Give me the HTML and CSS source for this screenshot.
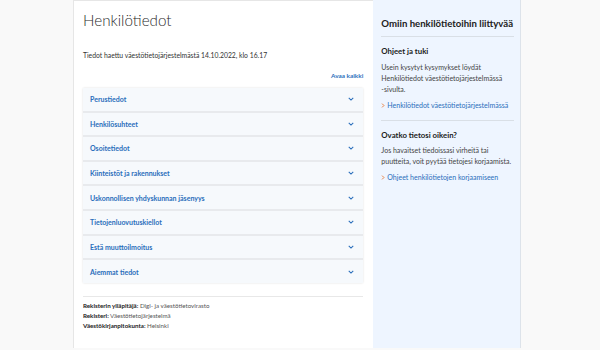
FILE: index.html
```html
<!DOCTYPE html>
<html lang="fi">
  <head>
    <meta charset="UTF-8" />
    <meta name="viewport" content="width=device-width, initial-scale=1.0" />
    <title>Henkilötiedot</title>
    <link rel="stylesheet" href="styles.css">
  </head>
  <body>
    <div class="layout">
      <main class="main">
        <h1>Henkilötiedot</h1>
        <p class="fetched">Tiedot haettu väestötietojärjestelmästä 14.10.2022, klo 16.17</p>

        <div class="open-all"><a href="#">Avaa kaikki</a></div>

        <div class="accordion">
          <div class="acc-item"><span>Perustiedot</span><svg class="chev" viewBox="0 0 8 5"><path d="M1 1l3 3 3-3"/></svg></div>
          <div class="acc-item"><span>Henkilösuhteet</span><svg class="chev" viewBox="0 0 8 5"><path d="M1 1l3 3 3-3"/></svg></div>
          <div class="acc-item"><span>Osoitetiedot</span><svg class="chev" viewBox="0 0 8 5"><path d="M1 1l3 3 3-3"/></svg></div>
          <div class="acc-item"><span>Kiinteistöt ja rakennukset</span><svg class="chev" viewBox="0 0 8 5"><path d="M1 1l3 3 3-3"/></svg></div>
          <div class="acc-item"><span>Uskonnollisen yhdyskunnan jäsenyys</span><svg class="chev" viewBox="0 0 8 5"><path d="M1 1l3 3 3-3"/></svg></div>
          <div class="acc-item"><span>Tietojenluovutuskiellot</span><svg class="chev" viewBox="0 0 8 5"><path d="M1 1l3 3 3-3"/></svg></div>
          <div class="acc-item"><span>Estä muuttoilmoitus</span><svg class="chev" viewBox="0 0 8 5"><path d="M1 1l3 3 3-3"/></svg></div>
          <div class="acc-item"><span>Aiemmat tiedot</span><svg class="chev" viewBox="0 0 8 5"><path d="M1 1l3 3 3-3"/></svg></div>
        </div>

        <div class="register">
          <div><b>Rekisterin ylläpitäjä:</b> Digi- ja väestötietovirasto</div>
          <div><b>Rekisteri:</b> Väestötietojärjestelmä</div>
          <div><b>Väestökirjanpitokunta:</b> Helsinki</div>
        </div>
      </main>

      <aside class="side">
        <h2>Omiin henkilötietoihin liittyvää</h2>

        <section class="side-block">
          <h3>Ohjeet ja tuki</h3>
          <p>Usein kysytyt kysymykset löydät Henkilötiedot väestötietojärjestelmässä <span class="nowrap">-sivulta.</span></p>
          <a class="side-link" href="#"><svg class="arrow" viewBox="0 0 5 8"><path d="M1 1l3 3-3 3"/></svg>Henkilötiedot väestötietojärjestelmässä</a>
        </section>

        <section class="side-block">
          <h3>Ovatko tietosi oikein?</h3>
          <p>Jos havaitset tiedoissasi virheitä tai puutteita, voit pyytää tietojesi korjaamista.</p>
          <a class="side-link" href="#"><svg class="arrow" viewBox="0 0 5 8"><path d="M1 1l3 3-3 3"/></svg>Ohjeet henkilötietojen korjaamiseen</a>
        </section>
      </aside>
    </div>
  </body>
</html>
```

FILE: styles.css
```css
body {
  margin: 0;
  background-color: #f9f9f9;
  font-family: "Lato", "Noto Sans", sans-serif;
  color: #212121;
}
a {
  color: #2a6ebb;
  text-decoration: none;
}
.nowrap {
  white-space: nowrap;
}
.layout {
  display: flex;
  width: 448px;
  height: 348px;
  margin-left: 73px;
}
.main {
  width: 281px;
  padding: 0 10px 0 9px;
  background-color: #fff;
  border-top: 1px solid #e6e6e6;
  border-left: 1px solid #e6e6e6;
}
h1 {
  margin: 7px 0 0;
  font-size: 15.2px;
  font-weight: 300;
  line-height: 24px;
  color: #2b2b2b;
}
.fetched {
  margin: 18px 0 0;
  font-size: 6.8px;
  line-height: 10px;
  color: #333;
}
.open-all {
  margin-top: 11px;
  text-align: right;
  font-size: 6.4px;
  font-weight: bold;
  line-height: 10px;
}
.accordion {
  margin-top: 7px;
  box-shadow: 0 0 2px rgba(0, 0, 0, 0.12);
}
.acc-item {
  display: flex;
  align-items: center;
  justify-content: space-between;
  height: 22.6px;
  padding: 0 9px 0 7px;
  background-color: #f6f9fc;
  border-bottom: 2px solid #e8eaed;
  font-size: 7px;
  font-weight: bold;
  color: #2a6ebb;
}
.acc-item:last-child {
  border-bottom: none;
  height: 23px;
}
.chev {
  width: 6px;
  height: 4px;
  fill: none;
  stroke: #2a6ebb;
  stroke-width: 1.4;
}
.register {
  margin-top: 13px;
  padding-top: 4px;
  border-top: 1px solid #e8e8e8;
  font-size: 6.2px;
  line-height: 10px;
  color: #555;
}
.register b {
  color: #222;
}
.side {
  width: 133px;
  padding: 0 6px 0 8px;
  background-color: #eef5ff;
  border-right: 1px solid #dde3ea;
}
h2 {
  margin: 18px 0 0;
  padding-bottom: 6px;
  border-bottom: 1px solid #d9dfe6;
  font-size: 9.6px;
  font-weight: bold;
  line-height: 12px;
}
.side-block {
  padding: 8px 0 9px;
  border-bottom: 1px solid #d9dfe6;
}
.side-block:last-child {
  border-bottom: none;
}
h3 {
  margin: 0;
  font-size: 7.8px;
  font-weight: bold;
  line-height: 12px;
}
.side p {
  margin: 4.5px 0 0;
  font-size: 7px;
  line-height: 11px;
  color: #444;
}
.side-link {
  display: flex;
  align-items: center;
  gap: 2px;
  margin-top: 5px;
  font-size: 7px;
  line-height: 11px;
}
.arrow {
  width: 4px;
  height: 5px;
  fill: none;
  stroke: #ea7125;
  stroke-width: 1.4;
}
```
